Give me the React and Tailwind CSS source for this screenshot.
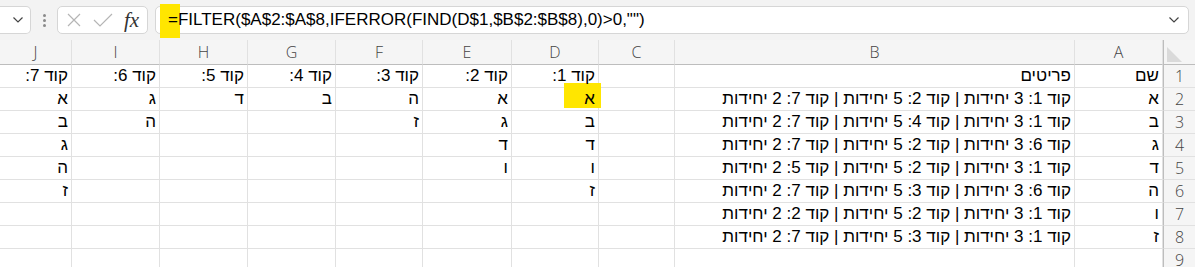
import React from "react";

const COLS = ["J", "I", "H", "G", "F", "E", "D", "C", "B", "A"];

// rows listed from left column (J) to right column (A), like the sheet is drawn
const ROWS = [
  ["קוד 7:", "קוד 6:", "קוד 5:", "קוד 4:", "קוד 3:", "קוד 2:", "קוד 1:", "", "פריטים", "שם"],
  ["א", "ג", "ד", "ב", "ה", "א", "א", "", "קוד 1: 3 יחידות | קוד 2: 5 יחידות | קוד 7: 2 יחידות", "א"],
  ["ב", "ה", "", "", "ז", "ג", "ב", "", "קוד 1: 3 יחידות | קוד 4: 5 יחידות | קוד 7: 2 יחידות", "ב"],
  ["ג", "", "", "", "", "ד", "ד", "", "קוד 6: 3 יחידות | קוד 2: 5 יחידות | קוד 7: 2 יחידות", "ג"],
  ["ה", "", "", "", "", "ו", "ו", "", "קוד 1: 3 יחידות | קוד 2: 5 יחידות | קוד 5: 2 יחידות", "ד"],
  ["ז", "", "", "", "", "", "ז", "", "קוד 6: 3 יחידות | קוד 3: 5 יחידות | קוד 7: 2 יחידות", "ה"],
  ["", "", "", "", "", "", "", "", "קוד 1: 3 יחידות | קוד 2: 5 יחידות | קוד 2: 2 יחידות", "ו"],
  ["", "", "", "", "", "", "", "", "קוד 1: 3 יחידות | קוד 3: 5 יחידות | קוד 7: 2 יחידות", "ז"],
  ["", "", "", "", "", "", "", "", "", ""],
];

const FORMULA = '=FILTER($A$2:$A$8,IFERROR(FIND(D$1,$B$2:$B$8),0)>0,"")';

function Chevron() {
  return (
    <svg width="12" height="8" viewBox="0 0 12 8" fill="none">
      <path d="M1.5 1.5 L6 6 L10.5 1.5" stroke="#444" strokeWidth="1.2" />
    </svg>
  );
}

function FormulaBar() {
  return (
    <div className="h-[40px] bg-[#f3f3f3] flex items-center gap-[7px] pr-[6px]">
      {/* name box */}
      <div className="w-[31px] h-[28px] bg-white border border-l-0 border-[#d6d6d6] rounded-r-[5px] flex items-center justify-end pr-[6px]">
        <Chevron />
      </div>
      <div className="w-[12px] h-[28px] flex flex-col items-center justify-center gap-[2px]">
        <span className="w-[3px] h-[3px] rounded-full bg-[#8a8a8a]" />
        <span className="w-[3px] h-[3px] rounded-full bg-[#8a8a8a]" />
        <span className="w-[3px] h-[3px] rounded-full bg-[#8a8a8a]" />
      </div>
      {/* cancel / enter / fx */}
      <div className="w-[91px] h-[28px] bg-white border border-[#d6d6d6] rounded-[5px] flex items-center pl-[9px]">
        <svg width="14" height="14" viewBox="0 0 14 14" fill="none">
          <path d="M1 1 L13 13 M13 1 L1 13" stroke="#b5b5b5" strokeWidth="1.2" />
        </svg>
        <svg className="ml-[12px]" width="20" height="14" viewBox="0 0 20 14" fill="none">
          <path d="M1 7 L7 13 L19 1" stroke="#b5b5b5" strokeWidth="1.2" />
        </svg>
        <span className="ml-[11px] font-['Liberation_Serif',serif] italic text-[21px] leading-none text-[#333]">
          fx
        </span>
      </div>
      {/* formula input */}
      <div className="relative flex-1 h-[28px] bg-white border border-[#d6d6d6] rounded-[5px] flex items-center pl-[12px] pr-[8px]">
        <span className="absolute left-[4px] top-[-3px] w-[20px] h-[34px] bg-[#ffe600]" />
        <span className="relative flex-1 font-['Liberation_Sans',Arial,sans-serif] text-[17px] text-black whitespace-nowrap">
          {FORMULA}
        </span>
        <Chevron />
      </div>
    </div>
  );
}

function Sheet() {
  return (
    <div className="relative grid grid-cols-[72px_88px_88px_88px_87px_89px_87px_76px_400px_88px_32px]">
      {/* column letters */}
      {COLS.map((c) => (
        <div
          key={c}
          className="h-[25px] bg-[#f5f5f5] border-r border-r-[#e1e1e1] border-b border-b-[#bdbdbd] flex items-center justify-center font-['Open_Sans',sans-serif] text-[16px] font-light text-[#444]"
        >
          {c}
        </div>
      ))}
      <div className="h-[25px] bg-[#f5f5f5] border-b border-b-[#bdbdbd] border-l border-l-[#bdbdbd] flex items-end pl-[3px] pb-[2px]">
        <svg width="15" height="15" viewBox="0 0 15 15">
          <polygon points="0,0 0,15 15,15" fill="#dadada" />
        </svg>
      </div>

      {ROWS.map((row, r) => (
        <React.Fragment key={r}>
          {row.map((v, c) => (
            <div
              key={c}
              dir="rtl"
              className="h-[23px] border-r border-b border-[#e1e1e1] flex items-center pr-[3px] overflow-hidden whitespace-nowrap font-['Liberation_Sans',Arial,sans-serif] text-[17px] text-black"
            >
              <span className="relative z-20">{v}</span>
            </div>
          ))}
          <div className="h-[23px] bg-[#f5f5f5] border-l border-l-[#bdbdbd] border-b border-b-[#e1e1e1] flex items-center justify-center font-['Open_Sans',sans-serif] text-[16px] font-light text-[#444]">
            {r + 1}
          </div>
        </React.Fragment>
      ))}

      {/* highlight on D2 */}
      <span className="absolute z-10 left-[564px] top-[43px] w-[37px] h-[25px] bg-[#ffe600]" />
    </div>
  );
}

export default function App() {
  return (
    <div className="w-[1195px] h-[267px] overflow-hidden bg-white">
      <FormulaBar />
      <Sheet />
    </div>
  );
}
